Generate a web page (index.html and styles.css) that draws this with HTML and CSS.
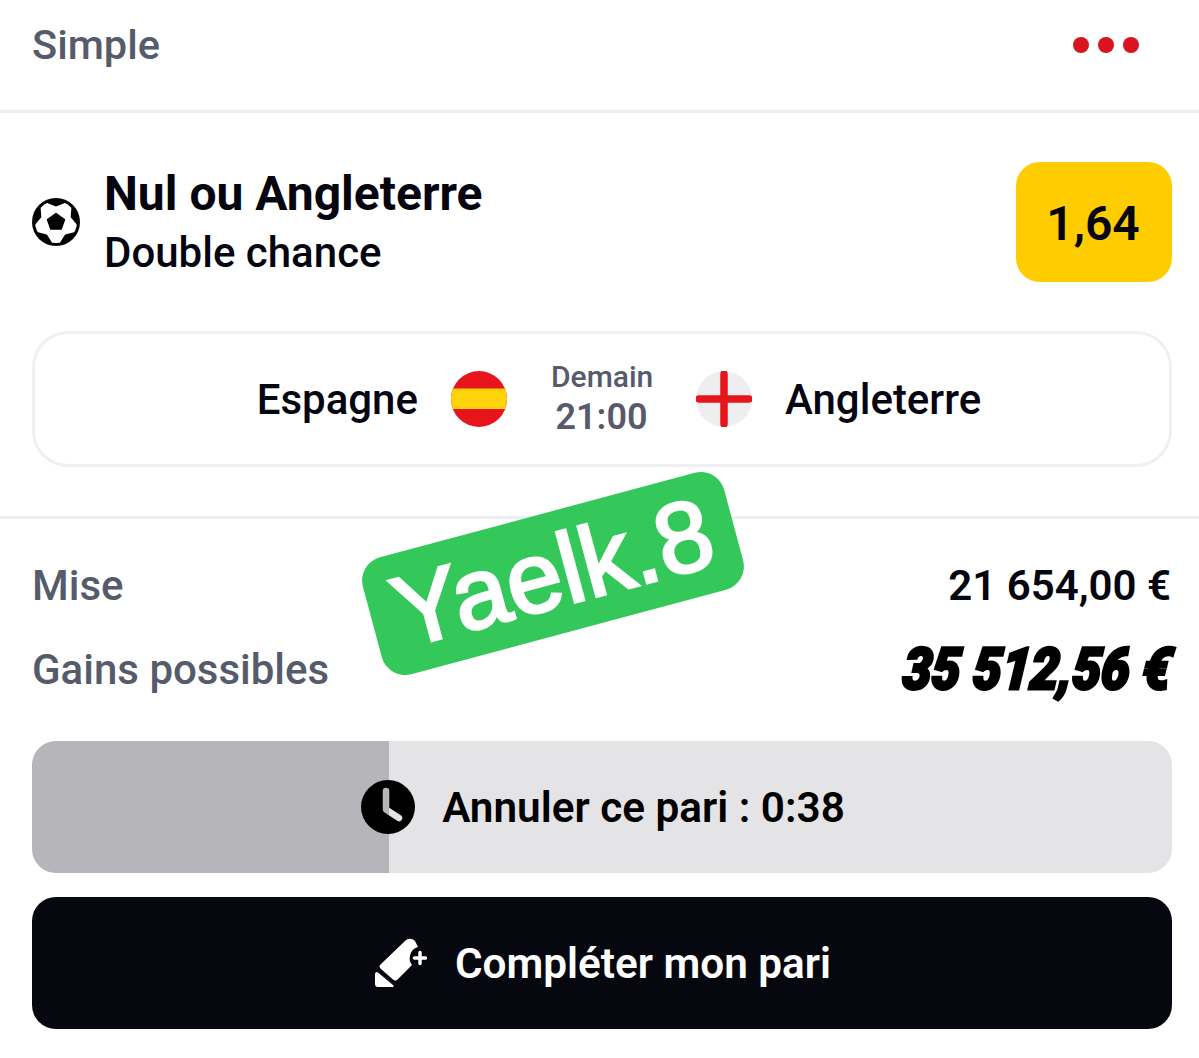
FILE: index.html
```html
<!DOCTYPE html>
<html lang="fr">
<head>
    <meta charset="UTF-8">
    <meta name="viewport" content="width=device-width, initial-scale=1.0">
    <title>Simple</title>
    <link rel="stylesheet" href="styles.css">
</head>
<body>
    <div class="page">
        <header class="header">
            <span class="header-title">Simple</span>
            <div class="dots"><span></span><span></span><span></span></div>
        </header>

        <section class="bet">
            <div class="bet-row">
                <svg class="ball" viewBox="0 0 48 48">
                    <clipPath id="ballClip"><circle cx="24" cy="24" r="21"/></clipPath>
                    <circle cx="24" cy="24" r="24" fill="#000"/>
                    <polygon clip-path="url(#ballClip)" points="24,8.500 39.900,2.200 38.700,19.200 49.700,32.300 33.100,36.500 24,51 14.900,36.500 -1.700,32.300 9.300,19.200 8.100,2.200" fill="#fff"/>
                    <polygon points="24,15.500 32.500,21.500 29.200,31 18.800,31 15.500,21.500" fill="#000" stroke="#000" stroke-width="1.500" stroke-linejoin="round"/>
                </svg>
                <div class="bet-text">
                    <div class="bet-name">Nul ou Angleterre</div>
                    <div class="bet-type">Double chance</div>
                </div>
                <div class="odds">1,64</div>
            </div>

            <div class="match">
                <div class="team team-home">
                    <span>Espagne</span>
                    <svg class="flag" viewBox="0 0 56 56">
                        <clipPath id="flagClip"><circle cx="28" cy="28" r="28"/></clipPath>
                        <g clip-path="url(#flagClip)">
                            <rect width="56" height="56" fill="#e8141c"/>
                            <rect y="17.500" width="56" height="20.500" fill="#ffd20a"/>
                        </g>
                    </svg>
                </div>
                <div class="kickoff">
                    <div class="kickoff-day">Demain</div>
                    <div class="kickoff-time">21:00</div>
                </div>
                <div class="team">
                    <svg class="flag" viewBox="0 0 56 56">
                        <circle cx="28" cy="28" r="28" fill="#eeeef0"/>
                        <path d="M28 3v50M3 28h50" stroke="#e8141c" stroke-width="7.500" stroke-linecap="round"/>
                    </svg>
                    <span>Angleterre</span>
                </div>
            </div>
        </section>

        <section class="summary">
            <div class="summary-row">
                <span class="summary-label">Mise</span>
                <span class="stake">21 654,00 €</span>
            </div>
            <div class="summary-row">
                <span class="summary-label">Gains possibles</span>
                <span class="winnings">35 512,56 €</span>
            </div>
        </section>

        <div class="actions">
            <button class="action action-cancel" type="button">
                <svg class="clock" viewBox="0 0 54 54">
                    <mask id="clockHands">
                        <rect width="54" height="54" fill="#fff"/>
                        <path d="M25 11v18.500L38 38" fill="none" stroke="#000" stroke-width="6.500" stroke-linecap="round" stroke-linejoin="round"/>
                    </mask>
                    <circle cx="27" cy="27" r="27" fill="#000" mask="url(#clockHands)"/>
                </svg>
                Annuler ce pari : 0:38
            </button>
            <button class="action action-complete" type="button">
                <svg class="pencil" viewBox="0 0 52 50">
                    <path d="M0 35.500a2 2 0 0 1 3-1L18 47a1 1 0 0 1-1 2H3a3 3 0 0 1-3-3z" fill="#fff"/>
                    <path d="M6 26 30 3c3-3 7-3 10 0l3 6a11 11 0 0 0-8 9c-1 4 0 6 2 9L23 41c-2 2-3 2-5 .5L6 31c-2-2-2-3 0-5z" fill="#fff"/>
                    <path d="M45 14.500v11M39.500 20h11" stroke="#fff" stroke-width="3.500" stroke-linecap="round"/>
                </svg>
                Compléter mon pari
            </button>
        </div>

        <div class="tag">Yaelk.8</div>
    </div>
</body>
</html>
```

FILE: styles.css
```css
* {
    box-sizing: border-box;
}
html, body {
    margin: 0;
    background: #fff;
}
body {
    font-family: Roboto, "Liberation Sans", sans-serif;
    color: #05050f;
}
.page {
    position: relative;
    height: 1058px;
    overflow: hidden;
}

/* top bar */
.header {
    height: 113px;
    padding: 0 60px 21px 32px;
    display: flex;
    align-items: center;
    justify-content: space-between;
    border-bottom: 3px solid #eeeef0;
}
.header-title {
    font-size: 41.500px;
    font-weight: 500;
    color: #565b6b;
}
.dots {
    display: flex;
    gap: 9px;
}
.dots span {
    width: 16px;
    height: 16px;
    border-radius: 50%;
    background: #d9141e;
}

/* selection + match card */
.bet {
    padding: 49px 27px 49px 32px;
    border-bottom: 3px solid #eeeef0;
}
.bet-row {
    display: flex;
    align-items: center;
    margin-bottom: 49px;
}
.ball {
    width: 48px;
    height: 48px;
    margin-right: 25px;
}
.bet-text {
    flex: 1;
    margin-left: -1px;
    padding-top: 2px;
}
.bet-name {
    font-size: 48px;
    font-weight: 700;
    line-height: 60px;
}
.bet-type {
    font-size: 42px;
    font-weight: 500;
    line-height: 58px;
}
.odds {
    width: 156px;
    height: 120px;
    padding: 2px 2px 0 0;
    border-radius: 24px;
    background: #ffcc00;
    font-size: 48px;
    font-weight: 600;
    display: flex;
    align-items: center;
    justify-content: center;
}
.match {
    height: 136px;
    padding-right: 1px;
    border: 3px solid #f0f0f2;
    border-radius: 36px;
    display: grid;
    grid-template-columns: 1fr 101px 1fr;
    column-gap: 44px;
    align-items: center;
    font-size: 42px;
    font-weight: 500;
}
.team {
    display: flex;
    align-items: center;
    gap: 33px;
}
.team-home {
    justify-content: flex-end;
}
.flag {
    width: 56px;
    height: 56px;
}
.kickoff {
    padding-bottom: 2px;
    text-align: center;
    color: #565b6b;
}
.kickoff-day {
    font-size: 30px;
    font-weight: 500;
    line-height: 38px;
}
.kickoff-time {
    font-size: 36px;
    font-weight: 600;
    line-height: 43px;
}

/* stake and payout */
.summary {
    padding: 24px 27px 30px 32px;
}
.summary-row {
    height: 84px;
    display: flex;
    align-items: center;
    justify-content: space-between;
}
.summary-label {
    font-size: 42px;
    font-weight: 500;
    color: #565b6b;
}
.stake {
    font-size: 42px;
    font-weight: 600;
    margin-right: 1px;
}
.winnings {
    font-size: 58px;
    font-weight: 900;
    font-style: italic;
    color: #000;
    -webkit-text-stroke: 3px #000;
    white-space: nowrap;
    transform: skewX(-5deg) scaleX(0.88);
    transform-origin: right center;
}

/* buttons */
.actions {
    padding: 0 27px 0 32px;
    display: flex;
    flex-direction: column;
    gap: 24px;
}
.action {
    height: 132px;
    padding: 0 0 0 2px;
    border: none;
    border-radius: 24px;
    font-family: inherit;
    font-size: 42.300px;
    font-weight: 600;
    display: flex;
    align-items: center;
    justify-content: center;
}
.action-cancel {
    gap: 27px;
    color: #000;
    background: linear-gradient(90deg, #b6b6ba 357px, #e4e4e7 357px);
}
.action-complete {
    gap: 28px;
    color: #fff;
    background: #07070f;
}
.clock {
    width: 54px;
    height: 54px;
}
.pencil {
    width: 52px;
    height: 50px;
}

/* sticker over the page */
.tag {
    position: absolute;
    left: 366px;
    top: 513px;
    width: 374px;
    height: 121px;
    border-radius: 24px;
    background: #34c85a;
    color: #fff;
    font-family: "Liberation Sans", Arial, sans-serif;
    font-size: 100px;
    line-height: 118px;
    text-align: center;
    -webkit-text-stroke: 3px #fff;
    transform: rotate(-15deg);
}
```
